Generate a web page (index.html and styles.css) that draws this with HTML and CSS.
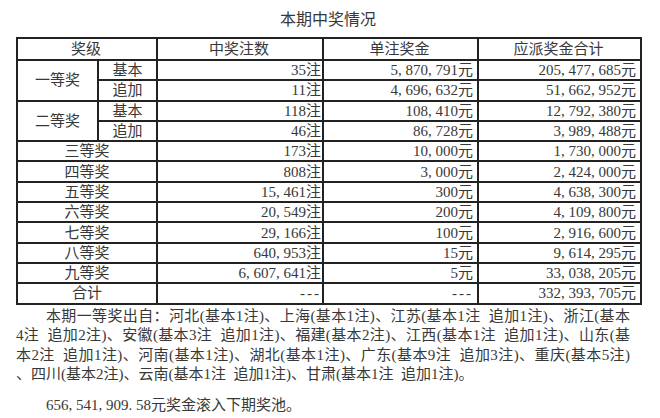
FILE: index.html
```html
<!DOCTYPE html>
<html lang="zh-CN">
<head>
<meta charset="utf-8">
<title>本期中奖情况</title>
<link rel="stylesheet" href="styles.css">
</head>
<body>
<div class="page">
  <h1 class="title">本期中奖情况</h1>
  <table class="prize">
    <colgroup><col class="w-a"><col class="w-b"><col class="w-n"><col class="w-p"><col class="w-t"></colgroup>
    <thead>
      <tr><th colspan="2">奖级</th><th>中奖注数</th><th>单注奖金</th><th>应派奖金合计</th></tr>
    </thead>
    <tbody>
      <tr><td rowspan="2" class="ctr">一等奖</td><td class="ctr">基本</td><td class="num cnt">35注</td><td class="num">5<span class="c">,</span>870<span class="c">,</span>791元</td><td class="num">205<span class="c">,</span>477<span class="c">,</span>685元</td></tr>
      <tr><td class="ctr">追加</td><td class="num cnt">11注</td><td class="num">4<span class="c">,</span>696<span class="c">,</span>632元</td><td class="num">51<span class="c">,</span>662<span class="c">,</span>952元</td></tr>
      <tr><td rowspan="2" class="ctr">二等奖</td><td class="ctr">基本</td><td class="num cnt">118注</td><td class="num">108<span class="c">,</span>410元</td><td class="num">12<span class="c">,</span>792<span class="c">,</span>380元</td></tr>
      <tr><td class="ctr">追加</td><td class="num cnt">46注</td><td class="num">86<span class="c">,</span>728元</td><td class="num">3<span class="c">,</span>989<span class="c">,</span>488元</td></tr>
      <tr><td colspan="2" class="ctr">三等奖</td><td class="num cnt">173注</td><td class="num">10<span class="c">,</span>000元</td><td class="num">1<span class="c">,</span>730<span class="c">,</span>000元</td></tr>
      <tr><td colspan="2" class="ctr">四等奖</td><td class="num cnt">808注</td><td class="num">3<span class="c">,</span>000元</td><td class="num">2<span class="c">,</span>424<span class="c">,</span>000元</td></tr>
      <tr><td colspan="2" class="ctr">五等奖</td><td class="num cnt">15<span class="c">,</span>461注</td><td class="num">300元</td><td class="num">4<span class="c">,</span>638<span class="c">,</span>300元</td></tr>
      <tr><td colspan="2" class="ctr">六等奖</td><td class="num cnt">20<span class="c">,</span>549注</td><td class="num">200元</td><td class="num">4<span class="c">,</span>109<span class="c">,</span>800元</td></tr>
      <tr><td colspan="2" class="ctr">七等奖</td><td class="num cnt">29<span class="c">,</span>166注</td><td class="num">100元</td><td class="num">2<span class="c">,</span>916<span class="c">,</span>600元</td></tr>
      <tr><td colspan="2" class="ctr">八等奖</td><td class="num cnt">640<span class="c">,</span>953注</td><td class="num">15元</td><td class="num">9<span class="c">,</span>614<span class="c">,</span>295元</td></tr>
      <tr><td colspan="2" class="ctr">九等奖</td><td class="num cnt">6<span class="c">,</span>607<span class="c">,</span>641注</td><td class="num">5元</td><td class="num">33<span class="c">,</span>038<span class="c">,</span>205元</td></tr>
      <tr><td colspan="2" class="ctr">合计</td><td class="num cnt"><span class="dash">---</span></td><td class="num"><span class="dash">---</span></td><td class="num">332<span class="c">,</span>393<span class="c">,</span>705元</td></tr>
    </tbody>
  </table>
  <p class="origin">
    <span class="ln first">本期一等奖出自：河北(基本1注)、上海(基本1注)、江苏(基本1注&nbsp; 追加1注)、浙江(基本</span>
    <span class="ln">4注&nbsp; 追加2注)、安徽(基本3注&nbsp; 追加1注)、福建(基本2注)、江西(基本1注&nbsp; 追加1注)、山东(基</span>
    <span class="ln">本2注&nbsp; 追加1注)、河南(基本1注)、湖北(基本1注)、广东(基本9注&nbsp; 追加3注)、重庆(基本5注)</span>
    <span class="ln last">、四川(基本2注)、云南(基本1注&nbsp; 追加1注)、甘肃(基本1注&nbsp; 追加1注)。</span>
  </p>
  <p class="pool">656<span class="c">,</span>541<span class="c">,</span>909<span class="c">.</span>58元奖金滚入下期奖池。</p>
</div>
</body>
</html>
```

FILE: styles.css
```css
* {
  box-sizing: border-box;
}

html,
body {
  margin: 0;
  padding: 0;
  background: #ffffff;
}

body {
  font-family: "Liberation Serif", "Noto Sans CJK SC", serif;
  font-size: 15px;
  color: #383838;
}

.page {
  width: 660px;
  padding: 0 20px 0 16px;
}

.title {
  width: 624px;
  height: 37px;
  margin: 0;
  padding-top: 10px;
  font-size: 16px;
  font-weight: normal;
  line-height: 20px;
  text-align: center;
}

.prize {
  width: 624px;
  border-collapse: collapse;
  table-layout: fixed;
}

.w-a { width: 81px; }
.w-b { width: 59px; }
.w-n { width: 166px; }
.w-p { width: 155px; }
.w-t { width: 163px; }

.prize th,
.prize td {
  border: 2px solid #222222;
  padding: 0 4px 0 2px;
  height: 20.3px;
  line-height: 18px;
  font-weight: normal;
  white-space: nowrap;
  overflow: hidden;
}

.prize thead th {
  height: 22px;
  text-align: center;
}

.prize td.ctr {
  padding: 0 2px;
  text-align: center;
}

.num {
  text-align: right;
}

.prize td.cnt {
  padding-right: 1px;
}

.c {
  letter-spacing: 0.25em;
}

.dash {
  letter-spacing: 2px;
}

.origin {
  margin: 0;
  padding-top: 2px;
  padding-right: 10px;
  line-height: 19.5px;
}

.ln {
  display: block;
  text-align: justify;
  text-align-last: justify;
}

.ln.first {
  text-indent: 2em;
}

.ln.last {
  text-align-last: auto;
}

.pool {
  margin: 11px 0 0;
  line-height: 19.5px;
  text-indent: 2em;
}
```
